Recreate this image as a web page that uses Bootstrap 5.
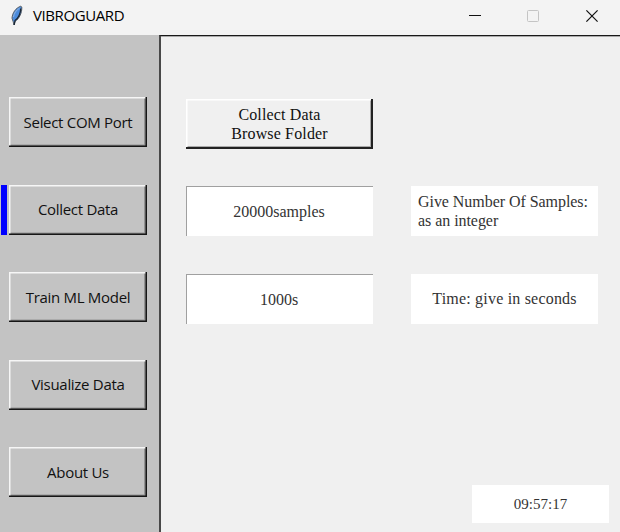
<!DOCTYPE html>
<html lang="en">
<head>
<meta charset="utf-8">
<title>VIBROGUARD</title>
<link href="https://cdn.jsdelivr.net/npm/bootstrap@5.3.0/dist/css/bootstrap.min.css" rel="stylesheet">
<style>
body { width: 620px; height: 532px; background: #f0f0f0; color: #000; }
.titlebar { height: 35px; background: #f3f3f3; font: 15px/35px "Open Sans", "Noto Sans", sans-serif; letter-spacing: -.4px; padding-left: 9px; }
.titlebar .app-name { margin-left: 9px; margin-top: -5px; }
.win-controls { gap: 46px; padding: 0 22px 3px 0; }
.sidebar { width: 159px; background: #c3c3c3; padding-top: 62px; gap: 37.5px; }
.menu-row { height: 50px; }
.marker { width: 6px; margin-left: 1px; margin-right: 2px; }
.marker.on { background: #00f; }
.btn.raised { border-radius: 0; border: 0; padding: 0; color: #111; }
.menu-row .btn { width: 138px; font: 15px/20px "Open Sans", "Noto Sans", sans-serif; letter-spacing: -.3px; padding-bottom: 1px;
  box-shadow: inset -1.5px -1.5px #161616, inset 1.5px 1.5px #f6f6f6, inset -3px -2.5px #939393; }
.main-pane { border-left: 2px solid #484848; border-top: 1px solid #181818; box-shadow: inset 0 1px #aaa; padding: 62px 0 9px 25px; font: 16px/19px "Liberation Serif", "Times New Roman", serif; }
.fields { display: grid; grid-template-columns: 187px 187px; column-gap: 38px; row-gap: 38px; grid-auto-rows: 50px; }
.btn.browse { font: inherit; line-height: 19px; letter-spacing: .15px; margin: 1px 0 -1px; background: #f0f0f0;
  box-shadow: inset -2px -2px #222, inset 1.5px 1.5px #fff, inset -3px -3px #aaa; }
.entry { background: #fff; border: 0; border-top: 1px solid #a0a0a0; border-left: 1px solid #a0a0a0; font: inherit; color: #333; padding: 0 2px 1px 0; width: 187px; outline: 0; }
.hint { background: #fff; color: #333; }
.hint.samples { padding-left: 7px; letter-spacing: -.05px; }
.hint.time { letter-spacing: .2px; padding-bottom: 1px; }
.clock { width: 137px; height: 38px; background: #fff; color: #333; margin-right: 11px; font-size: 15px; }
</style>
</head>
<body class="d-flex flex-column overflow-hidden">
<header class="titlebar d-flex align-items-center flex-shrink-0">
  <svg width="15" height="22" viewBox="0 0 15 22" style="margin-top:-3px">
    <path d="M11.8 1.2C7 2.8 3.4 7.5 3 13.2L4.2 16.8 5 20 6 16.5C10.6 13.4 13 7.8 12.8 2Z" fill="#4b8bdc" stroke="#5a6068" stroke-width="1"/>
    <path d="M11.8 3.5C11.5 8.5 9.5 13 6 15.6L5.2 20" fill="none" stroke="#1b2836" stroke-width="1.3"/>
    <path d="M10.5 3.2C7.3 5 5 8.5 4.5 12" fill="none" stroke="#8fb4e2"/>
  </svg>
  <span class="app-name">VIBROGUARD</span>
  <div class="win-controls d-flex align-items-center ms-auto">
    <svg width="12" height="12"><path d="M0 5.5h12" stroke="#111"/></svg>
    <svg width="12" height="12"><rect x=".5" y=".5" width="11" height="11" rx="1" fill="none" stroke="#c4c4c4"/></svg>
    <svg width="13" height="12"><path d="M1.4.4l11.2 11.2M12.6.4L1.4 11.6" stroke="#111" stroke-width="1.2"/></svg>
  </div>
</header>
<div class="d-flex flex-grow-1">
  <nav class="sidebar d-flex flex-column flex-shrink-0">
    <div class="menu-row d-flex"><span class="marker"></span><button class="btn raised">Select COM Port</button></div>
    <div class="menu-row d-flex"><span class="marker on"></span><button class="btn raised">Collect Data</button></div>
    <div class="menu-row d-flex"><span class="marker"></span><button class="btn raised">Train ML Model</button></div>
    <div class="menu-row d-flex"><span class="marker"></span><button class="btn raised">Visualize Data</button></div>
    <div class="menu-row d-flex"><span class="marker"></span><button class="btn raised">About Us</button></div>
  </nav>
  <main class="main-pane flex-grow-1 d-flex flex-column">
    <div class="fields">
      <button class="btn raised browse">Collect Data<br>Browse Folder</button><span></span>
      <input class="entry text-center" value="20000samples">
      <div class="hint samples d-flex align-items-center">Give Number Of Samples:<br>as an integer</div>
      <input class="entry text-center" value="1000s">
      <div class="hint time d-flex align-items-center justify-content-center">Time: give in seconds</div>
    </div>
    <div class="clock d-flex align-items-center justify-content-center ms-auto mt-auto">09:57:17</div>
  </main>
</div>
<script src="https://cdn.jsdelivr.net/npm/bootstrap@5.3.0/dist/js/bootstrap.bundle.min.js"></script>
</body>
</html>
